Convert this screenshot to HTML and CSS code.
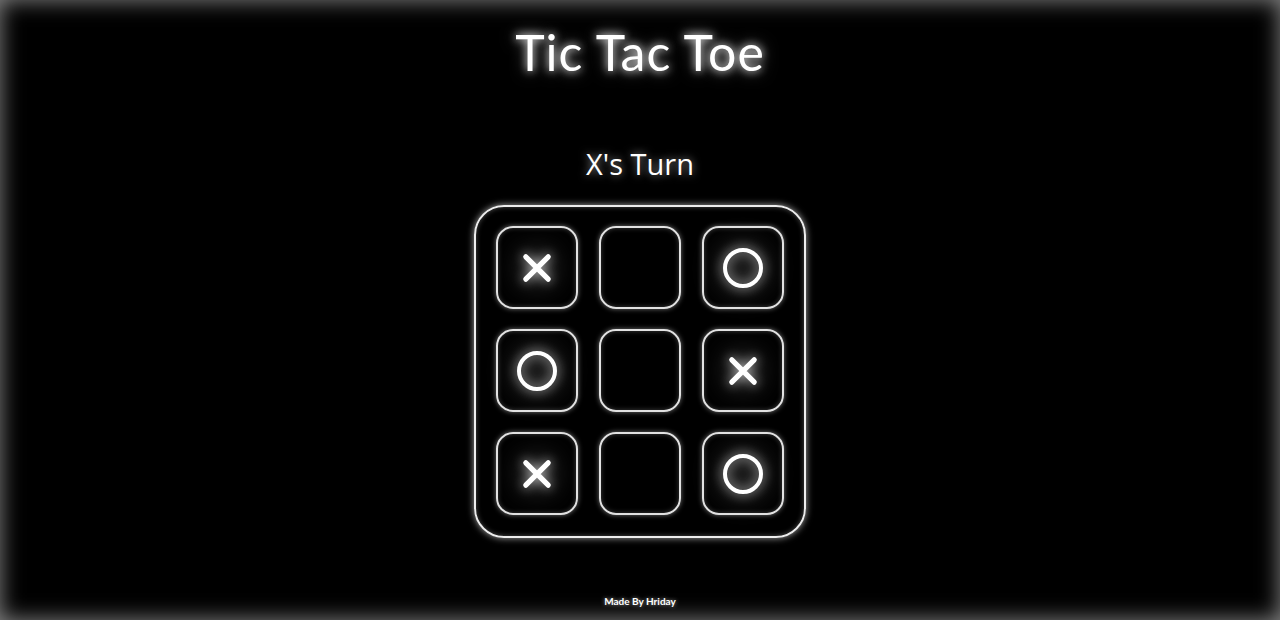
FILE: index.html
```html
<!DOCTYPE html>
<html lang="en">
<head>
<meta charset="utf-8">
<title>Tic Tac Toe</title>
<link rel="stylesheet" href="styles.css">
</head>
<body>
<div class="page">
  <h1 class="title">Tic Tac Toe</h1>
  <h2 class="turn">X's Turn</h2>
  <div class="board">
    <div class="cell"><svg class="mark" viewBox="0 0 40 40"><path d="M6 6 L34 34 M34 6 L6 34"/></svg></div>
    <div class="cell"></div>
    <div class="cell"><svg class="mark" viewBox="0 0 40 40"><circle cx="20" cy="20" r="18"/></svg></div>
    <div class="cell"><svg class="mark" viewBox="0 0 40 40"><circle cx="20" cy="20" r="18"/></svg></div>
    <div class="cell"></div>
    <div class="cell"><svg class="mark" viewBox="0 0 40 40"><path d="M6 6 L34 34 M34 6 L6 34"/></svg></div>
    <div class="cell"><svg class="mark" viewBox="0 0 40 40"><path d="M6 6 L34 34 M34 6 L6 34"/></svg></div>
    <div class="cell"></div>
    <div class="cell"><svg class="mark" viewBox="0 0 40 40"><circle cx="20" cy="20" r="18"/></svg></div>
  </div>
  <footer class="footer">Made By Hriday</footer>
</div>
</body>
</html>
```

FILE: styles.css
```css
html, body {
  margin: 0;
  padding: 0;
  background: #000;
}
.page {
  height: 620px;
  box-sizing: border-box;
  display: flex;
  flex-direction: column;
  align-items: center;
  color: #fff;
  font-family: Lato, "Noto Sans", sans-serif;
  box-shadow: inset 0 0 22px #8a8a8a;
  padding-top: 22px;
}
.title {
  margin: 0;
  font-size: 50px;
  font-weight: 400;
  line-height: 60px;
  letter-spacing: 1px;
  text-shadow: 0 0 8px rgba(255,255,255,0.9), 0 0 16px rgba(255,255,255,0.5);
}
.turn {
  margin: 62px 0 0 0;
  font-family: "Open Sans", sans-serif;
  font-size: 29px;
  font-weight: 400;
  line-height: 40px;
  text-shadow: 0 0 8px rgba(255,255,255,0.6);
}
.board {
  margin-top: 21px;
  width: 332px;
  height: 333px;
  box-sizing: border-box;
  border: 2px solid #ededed;
  border-radius: 30px;
  padding: 19px 20px;
  display: grid;
  grid-template-columns: repeat(3, 82px);
  grid-template-rows: repeat(3, 83px);
  column-gap: 21px;
  row-gap: 20px;
  box-shadow: 0 0 7px rgba(255,255,255,0.65), inset 0 0 5px rgba(255,255,255,0.3);
}
.cell {
  box-sizing: border-box;
  border: 2px solid #e2e2e2;
  border-radius: 17px;
  display: flex;
  align-items: center;
  justify-content: center;
  box-shadow: 0 0 5px rgba(255,255,255,0.45), inset 0 0 5px rgba(255,255,255,0.25);
}
.mark {
  width: 40px;
  height: 40px;
  fill: none;
  stroke: #fff;
  stroke-width: 4;
  stroke-linecap: round;
  filter: drop-shadow(0 0 6px rgba(255,255,255,0.8)) drop-shadow(0 0 14px rgba(255,255,255,0.4));
}
.mark path {
  stroke-width: 6.5;
  transform: scale(0.8);
  transform-origin: 20px 20px;
}
.footer {
  margin-top: auto;
  margin-bottom: 13px;
  font-size: 10px;
  font-weight: 700;
  text-shadow: 0 0 4px rgba(255,255,255,0.6);
}
```
